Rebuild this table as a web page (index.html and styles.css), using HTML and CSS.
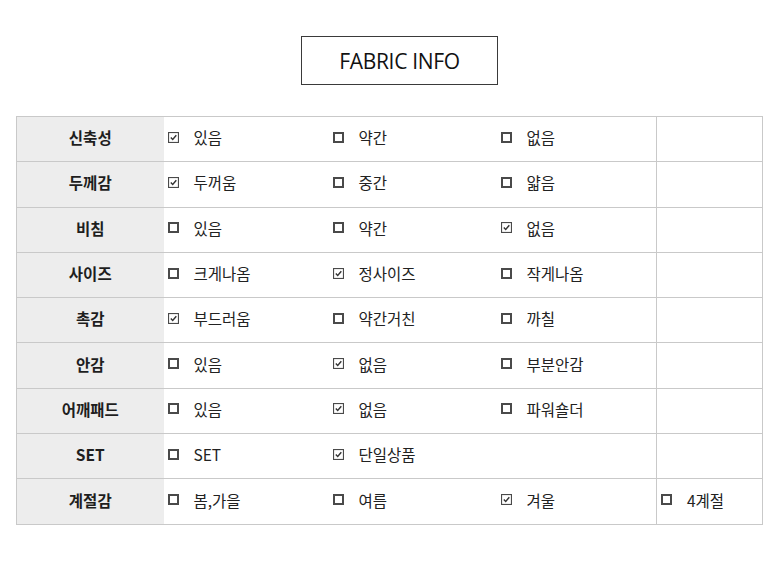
FILE: index.html
```html
<!DOCTYPE html>
<html lang="ko">
<head>
<meta charset="utf-8">
<title>FABRIC INFO</title>
<link rel="stylesheet" href="styles.css">
</head>
<body>
<div class="page">
  <div class="title-wrap"><h1 class="title">FABRIC INFO</h1></div>
  <table class="fabric">
    <colgroup>
      <col class="c-label"><col class="c1"><col class="c2"><col class="c3"><col class="c4">
    </colgroup>
    <tbody>
      <tr><th>신축성</th>
        <td><span class="opt"><svg class="cb on"><use href="#on"/></svg>있음</span></td>
        <td><span class="opt"><svg class="cb"><use href="#off"/></svg>약간</span></td>
        <td><span class="opt"><svg class="cb"><use href="#off"/></svg>없음</span></td>
        <td class="last"></td></tr>
      <tr><th>두께감</th>
        <td><span class="opt"><svg class="cb on"><use href="#on"/></svg>두꺼움</span></td>
        <td><span class="opt"><svg class="cb"><use href="#off"/></svg>중간</span></td>
        <td><span class="opt"><svg class="cb"><use href="#off"/></svg>얇음</span></td>
        <td class="last"></td></tr>
      <tr><th>비침</th>
        <td><span class="opt"><svg class="cb"><use href="#off"/></svg>있음</span></td>
        <td><span class="opt"><svg class="cb"><use href="#off"/></svg>약간</span></td>
        <td><span class="opt"><svg class="cb on"><use href="#on"/></svg>없음</span></td>
        <td class="last"></td></tr>
      <tr><th>사이즈</th>
        <td><span class="opt"><svg class="cb"><use href="#off"/></svg>크게나옴</span></td>
        <td><span class="opt"><svg class="cb on"><use href="#on"/></svg>정사이즈</span></td>
        <td><span class="opt"><svg class="cb"><use href="#off"/></svg>작게나옴</span></td>
        <td class="last"></td></tr>
      <tr><th>촉감</th>
        <td><span class="opt"><svg class="cb on"><use href="#on"/></svg>부드러움</span></td>
        <td><span class="opt"><svg class="cb"><use href="#off"/></svg>약간거친</span></td>
        <td><span class="opt"><svg class="cb"><use href="#off"/></svg>까칠</span></td>
        <td class="last"></td></tr>
      <tr><th>안감</th>
        <td><span class="opt"><svg class="cb"><use href="#off"/></svg>있음</span></td>
        <td><span class="opt"><svg class="cb on"><use href="#on"/></svg>없음</span></td>
        <td><span class="opt"><svg class="cb"><use href="#off"/></svg>부분안감</span></td>
        <td class="last"></td></tr>
      <tr><th>어깨패드</th>
        <td><span class="opt"><svg class="cb"><use href="#off"/></svg>있음</span></td>
        <td><span class="opt"><svg class="cb on"><use href="#on"/></svg>없음</span></td>
        <td><span class="opt"><svg class="cb"><use href="#off"/></svg>파워숄더</span></td>
        <td class="last"></td></tr>
      <tr><th>SET</th>
        <td><span class="opt"><svg class="cb"><use href="#off"/></svg>SET</span></td>
        <td><span class="opt"><svg class="cb on"><use href="#on"/></svg>단일상품</span></td>
        <td></td>
        <td class="last"></td></tr>
      <tr><th>계절감</th>
        <td><span class="opt"><svg class="cb"><use href="#off"/></svg>봄,가을</span></td>
        <td><span class="opt"><svg class="cb"><use href="#off"/></svg>여름</span></td>
        <td><span class="opt"><svg class="cb on"><use href="#on"/></svg>겨울</span></td>
        <td class="last"><span class="opt"><svg class="cb"><use href="#off"/></svg>4계절</span></td></tr>
    </tbody>
  </table>
</div>
<svg class="defs" width="0" height="0" aria-hidden="true">
  <defs>
    <g id="off"><rect x="1" y="1" width="9" height="9" fill="none" stroke="#4a4a4a" stroke-width="2"/></g>
    <g id="on"><rect x="0.5" y="0.5" width="10" height="10" fill="none" stroke="#4a4a4a" stroke-width="1.2"/><path d="M2.8 5.6 L4.7 7.5 L8.3 3.3" fill="none" stroke="#333" stroke-width="1.4"/></g>
  </defs>
</svg>
</body>
</html>
```
FILE: styles.css
```css
html, body {
  margin: 0;
  padding: 0;
  background: #ffffff;
}
body {
  font-family: "Noto Sans CJK KR", "Noto Sans", sans-serif;
  color: #222;
}
.page {
  padding: 36px 0 0 16px;
  width: 746px;
}
.title-wrap {
  display: flex;
  justify-content: center;
  padding-left: 21px;
}
.title {
  margin: 0;
  width: 195px;
  height: 47px;
  border: 1px solid #3a3a3a;
  display: flex;
  align-items: center;
  justify-content: center;
  font-family: "Open Sans", "Noto Sans", sans-serif;
  font-weight: 400;
  font-size: 21px;
  color: #111;
  letter-spacing: -0.3px;
}
.defs {
  position: absolute;
}
.fabric {
  margin-top: 31px;
  width: 746px;
  border-collapse: collapse;
  table-layout: fixed;
  border: 1px solid #c9c9c9;
}
.c-label { width: 147px; }
.c1 { width: 165px; }
.c2 { width: 168px; }
.c3 { width: 160px; }
.c4 { width: 106px; }
.fabric tr {
  height: 45.3px;
}
.fabric th, .fabric td {
  border-top: 1px solid #c9c9c9;
  border-bottom: 1px solid #c9c9c9;
  padding: 0 0 4px 0;
  font-size: 15.5px;
  vertical-align: middle;
}
.fabric th {
  background: #ededed;
  font-weight: 700;
  text-align: center;
  color: #1e1e1e;
}
.fabric td {
  padding-left: 4px;
  color: #222;
}
.fabric td.last {
  border-left: 1px solid #c9c9c9;
  border-right: 1px solid #c9c9c9;
}
.opt {
  display: flex;
  align-items: center;
  gap: 15px;
}
.cb {
  width: 11px;
  height: 11px;
  flex: none;
}
```
